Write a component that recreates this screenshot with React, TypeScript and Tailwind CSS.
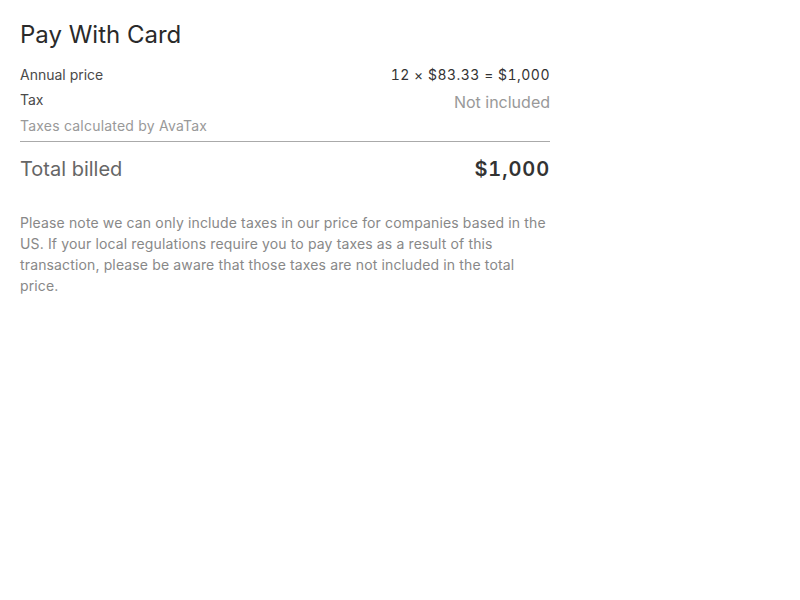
export default function App() {
  return (
    <div className="min-h-screen bg-white font-['Inter',sans-serif]">
      <div className="w-[570px] px-5 pt-[19px]">
        <h1 className="text-2xl leading-8 text-[#2a2a2a]">Pay With Card</h1>

        <div className="mt-[14px] flex items-start justify-between">
          <span className="text-sm leading-5 text-[#4a4a4a]">Annual price</span>
          <span className="text-sm leading-5 tabular-nums tracking-[0.035em] text-[#333]">12 × $83.33 = $1,000</span>
        </div>

        <div className="mt-[5px] flex items-start justify-between">
          <div className="flex flex-col">
            <span className="text-sm leading-5 text-[#4a4a4a]">Tax</span>
            <span className="mt-[6px] text-sm leading-5 tracking-[0.015em] text-[#999]">Taxes calculated by AvaTax</span>
          </div>
          <span className="text-base leading-6 text-[#999]">Not included</span>
        </div>

        <div className="mt-[5px] border-t border-[#aaa]" />

        <div className="mt-[13px] flex items-center justify-between">
          <span className="text-xl leading-7 text-[#666]">Total billed</span>
          <span className="text-xl leading-7 font-semibold tabular-nums tracking-[0.045em] text-[#333]">$1,000</span>
        </div>

        <p className="mt-[29px] text-sm leading-[21px] tracking-[0.01em] text-[#888]">
          Please note we can only include taxes in our price for companies based in the US. If your local
          regulations require you to pay taxes as a result of this transaction, please be aware that those
          taxes are not included in the total price.
        </p>
      </div>
    </div>
  );
}
